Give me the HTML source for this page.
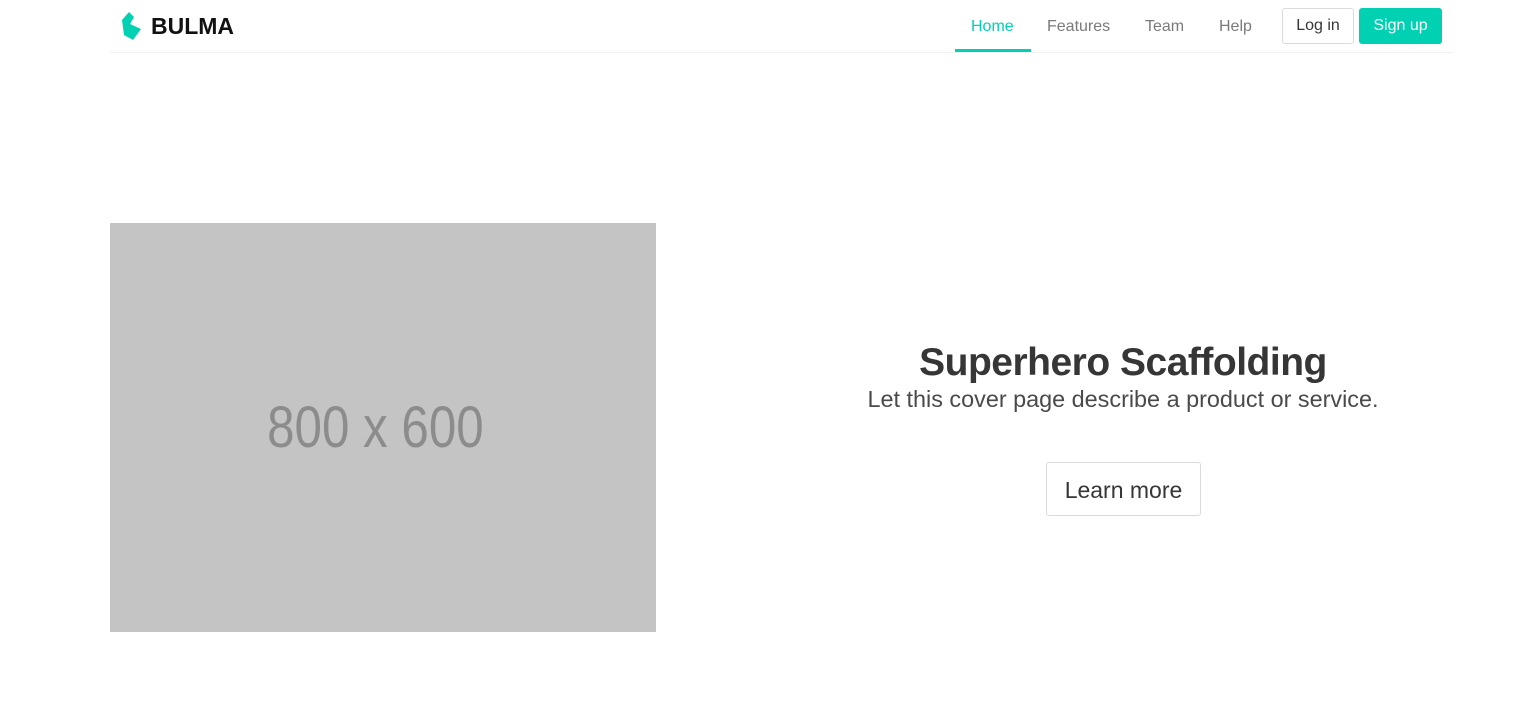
<!DOCTYPE html>
<html><head><style>
body{margin:0;background:#fff;font-family:"Liberation Sans",sans-serif;width:1533px;height:725px;overflow:hidden;position:relative}
.nav{position:absolute;left:110px;top:0;width:1343px;height:52px;border-bottom:1px solid #f2f2f2}
.a{position:absolute;top:18px;font-size:16px;color:#7a7a7a}
.btn{position:absolute;top:8px;height:36px;box-sizing:border-box;border-radius:3px;font-size:16px;line-height:36px;text-align:center}
</style></head><body>
<div class="nav">
<svg style="position:absolute;left:12px;top:12px" width="20" height="28" viewBox="0 0 20 28"><path d="M7 0 L12 5 L8 12 L19 17 L11 28 L2 23 L0 8 Z" fill="#00d1b2"/></svg>
<div style="position:absolute;left:41px;top:13px;font-size:23px;font-weight:bold;color:#111">BULMA</div>
<div class="a" style="left:861px;color:#00d1b2">Home</div>
<div style="position:absolute;left:845px;top:49px;width:76px;height:3px;background:#00d1b2"></div>
<div class="a" style="left:937px">Features</div>
<div class="a" style="left:1035px">Team</div>
<div class="a" style="left:1109px">Help</div>
<div class="btn" style="left:1172px;width:72px;border:1px solid #dbdbdb;color:#363636;line-height:34px">Log in</div>
<div class="btn" style="left:1249px;width:83px;background:#00d1b2;color:#fff">Sign up</div>
</div>
<div style="position:absolute;left:110px;top:223px;width:546px;height:409px;background:#c4c4c4"></div>
<div style="position:absolute;left:102px;top:223px;width:546px;height:409px;color:#8c8c8c;font-size:58px;text-align:center;line-height:409px"><span style="display:inline-block;transform:scaleX(0.85)">800 x 600</span></div>
<div style="position:absolute;left:823px;width:600px;top:341px;text-align:center">
<div style="font-size:39px;font-weight:bold;color:#363636;letter-spacing:-0.5px">Superhero Scaffolding</div>
<div style="font-size:23.4px;color:#4a4a4a;margin-top:1px">Let this cover page describe a product or service.</div>
</div>
<div style="position:absolute;left:1046px;top:462px;width:155px;height:54px;box-sizing:border-box;border:1px solid #dbdbdb;border-radius:3px;font-size:23px;line-height:54px;text-align:center;color:#363636">Learn more</div>
</body></html>
